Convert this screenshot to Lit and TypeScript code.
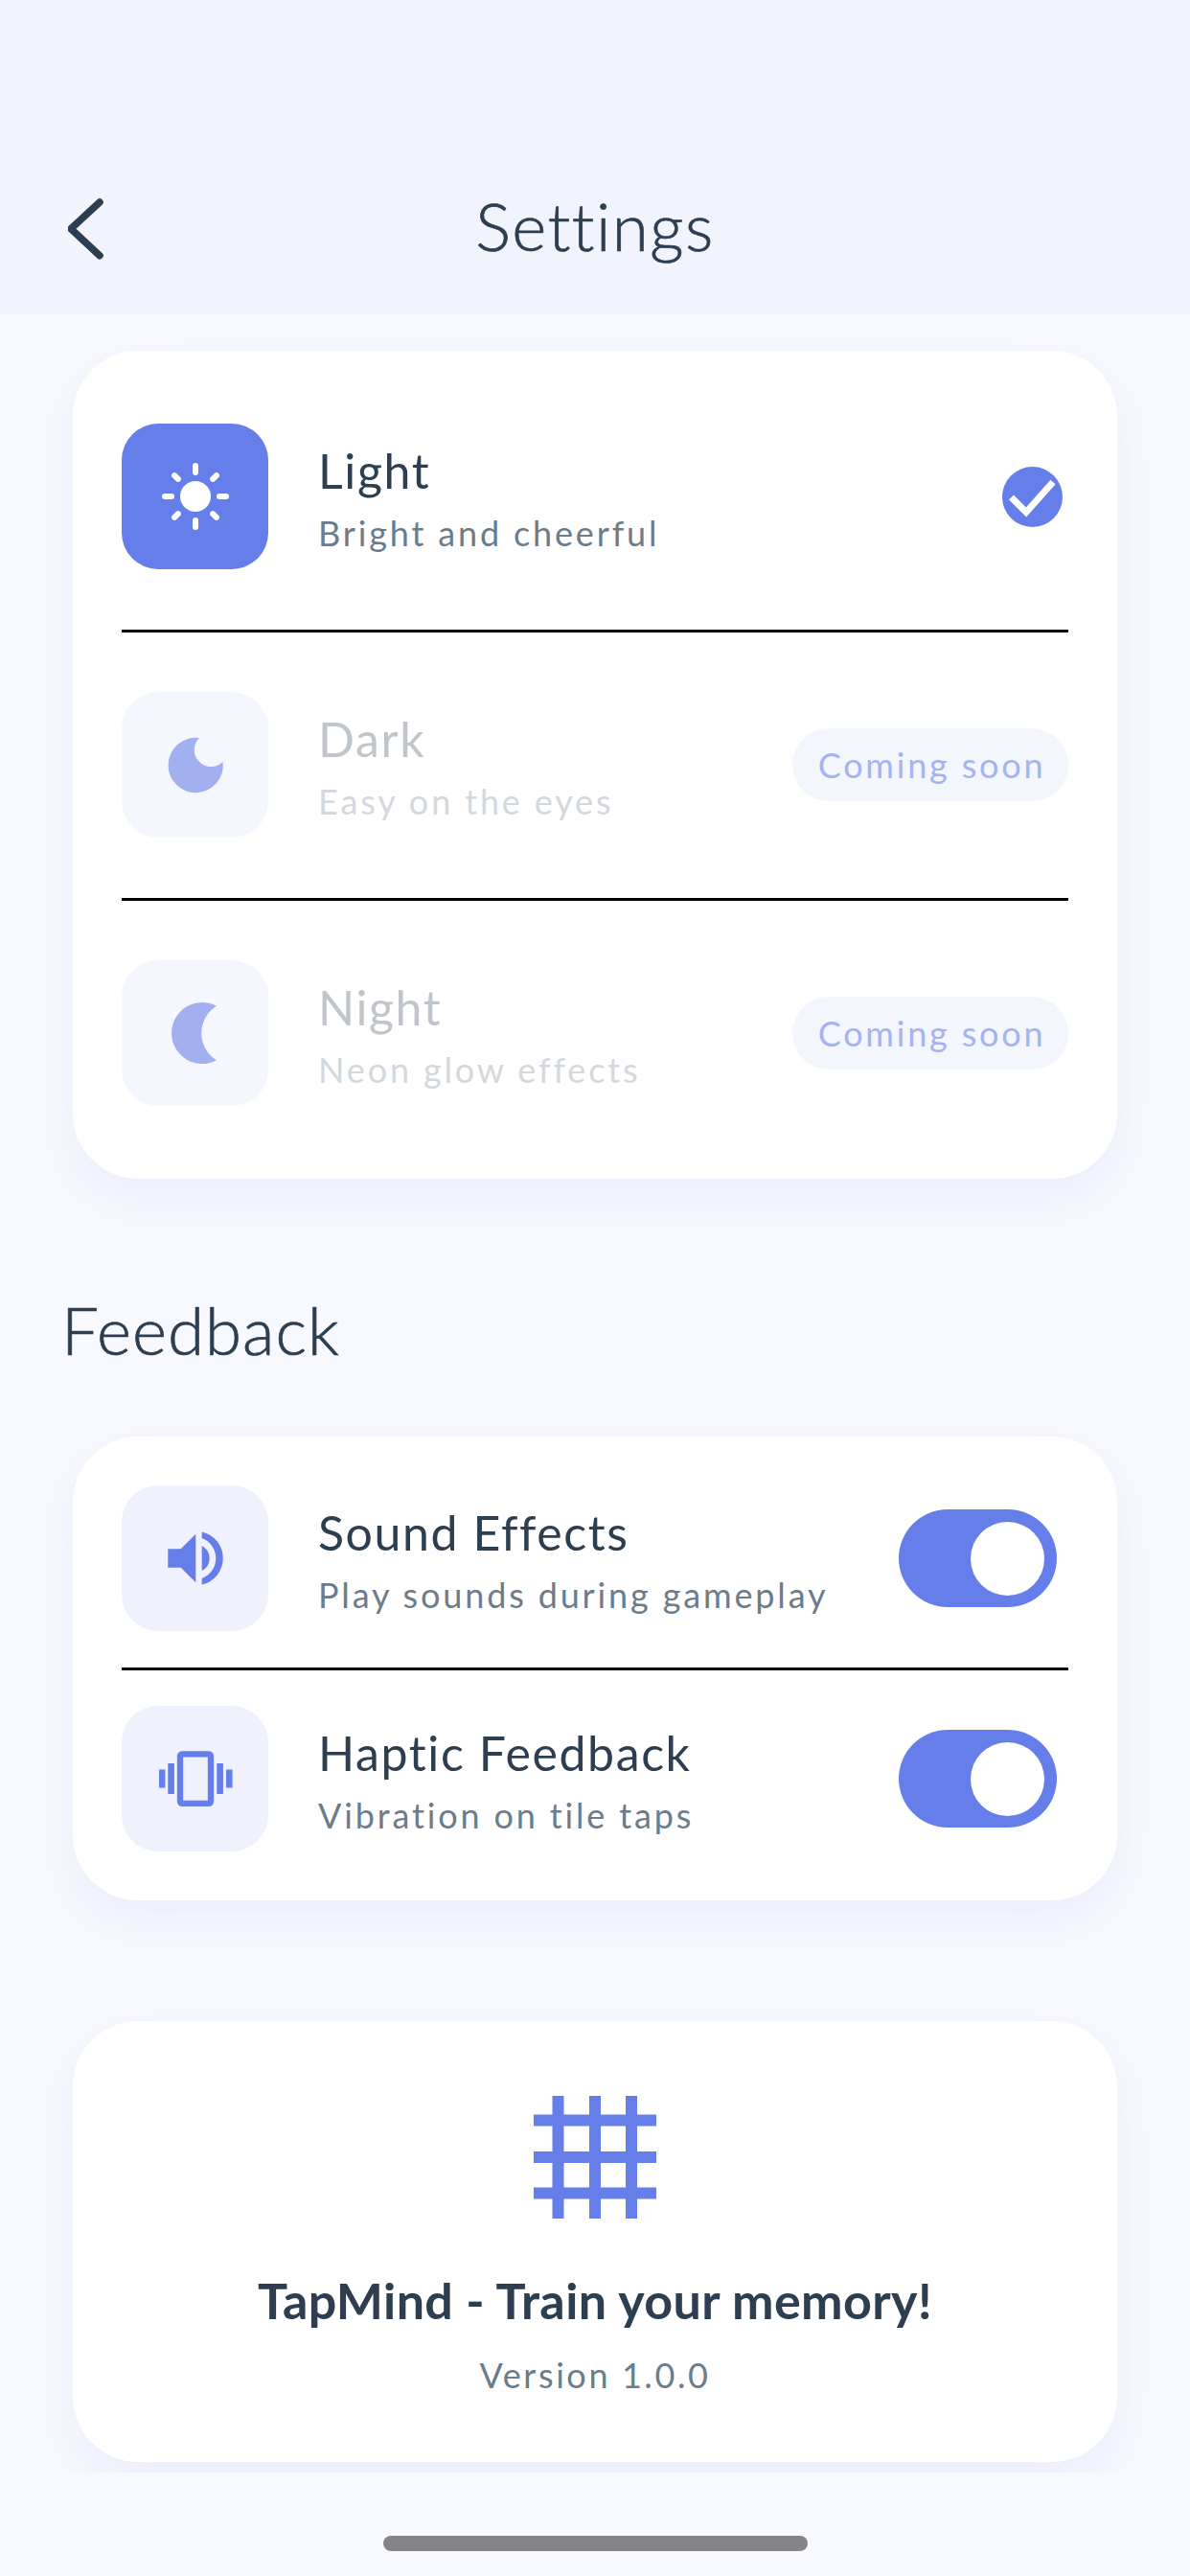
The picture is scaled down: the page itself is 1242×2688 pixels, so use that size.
import { LitElement, css, html, svg } from "lit";
import { customElement } from "lit/decorators.js";

const sunRays = [0, 45, 90, 135, 180, 225, 270, 315];

const icons = {
  sun: svg`<circle r="16" fill="currentColor" />
    ${sunRays.map((a) => {
      const diagonal = a % 90 !== 0;
      return svg`<line x1="0" y1=${diagonal ? -25.6 : -25} x2="0" y2=${diagonal ? -31 : -32}
        transform="rotate(${a})" stroke="currentColor" stroke-width="6" stroke-linecap="round" />`;
    })}`,
  dark: svg`<path fill="currentColor" d="M4 -28A28.7 28.7 0 1 0 28.7 -3A17.5 17.5 0 0 1 4 -28Z" />`,
  night: svg`<path fill="currentColor" d="M22 -28.3A32 32 0 1 0 22 28.3A33.3 33.3 0 0 1 22 -28.3Z" />`,
  sound: svg`<g fill="currentColor">
    <path d="M-28.7 -9.7H-15.3L0.3 -25.3V25.3L-15.3 9.7H-28.7Z" />
    <path d="M6.7 -13A14.6 14.6 0 0 1 6.7 13Z" />
    <path d="M6.7 -27.6A28.3 28.3 0 0 1 6.7 27.6V21A22.4 22.4 0 0 0 6.7 -21Z" />
  </g>`,
  haptic: svg`<g fill="currentColor">
    <rect x="-16" y="-25.6" width="32" height="51.4" rx="2" fill="none" stroke="currentColor" stroke-width="6.3" />
    <rect x="-28.7" y="-16" width="6.6" height="32" />
    <rect x="-38" y="-9.5" width="6.4" height="19" />
    <rect x="22.3" y="-16" width="6.6" height="32" />
    <rect x="32" y="-9.5" width="6.6" height="19" />
  </g>`,
};

type IconName = keyof typeof icons;

const glyph = (name: IconName) =>
  html`<svg class="glyph" viewBox="-50 -50 100 100">${icons[name]}</svg>`;

@customElement("app-root")
export class AppRoot extends LitElement {
  static styles = css`
    :host {
      display: block;
      width: 1242px;
      height: 2688px;
      background: #f8f9fe;
      color: #2c3e50;
      font-family: Lato, "Noto Sans", sans-serif;
      font-variant-ligatures: none;
      overflow: hidden;
    }
    .screen {
      display: flex;
      flex-direction: column;
      height: 2688px;
    }
    .header {
      height: 328px;
      flex: none;
      box-sizing: border-box;
      padding: 188px 0 0 71px;
      background: #f1f4fd;
      display: grid;
      grid-template-columns: 1fr auto 1fr;
      align-items: start;
    }
    .back {
      width: 40px;
      height: 66px;
      margin-top: 18px;
    }
    .header h1 {
      margin: 0 0 0 -71px;
      font-size: 69px;
      line-height: 96px;
      font-weight: 300;
      letter-spacing: 1.5px;
      -webkit-text-stroke: 0.7px #2c3e50;
    }
    .content {
      height: 2252px;
      flex: none;
      box-sizing: border-box;
      overflow: hidden;
      padding: 38px 76px 0;
    }
    .card {
      background: #fff;
      border-radius: 68px;
      padding: 13px 51px;
      box-shadow: 0 20px 50px rgba(101, 126, 233, 0.09);
    }
    .row {
      display: flex;
      align-items: center;
      padding: 63px 0;
    }
    .row + .row {
      border-top: 3px solid #000;
      padding-top: 62px;
    }
    .row.compact {
      padding: 38px 0;
    }
    .row.compact + .row.compact {
      padding-top: 37px;
    }
    .icon-box {
      width: 153px;
      height: 152px;
      flex: none;
      border-radius: 38px;
      background: #eff1fd;
      color: #657ee9;
      display: flex;
      align-items: center;
      justify-content: center;
    }
    .icon-box.active {
      background: #657ee9;
      color: #fff;
    }
    .icon-box.disabled {
      background: #f5f7ff;
      color: #a3b0f0;
    }
    .glyph {
      width: 100px;
      height: 100px;
    }
    .text {
      flex: 1;
      margin-left: 52px;
      padding-top: 3px;
      min-width: 0;
    }
    .name {
      font-size: 50px;
      line-height: 64px;
      letter-spacing: 1.6px;
    }
    .desc {
      margin-top: 8px;
      font-size: 36px;
      line-height: 50px;
      letter-spacing: 2.85px;
      color: #6b7c8c;
    }
    .disabled-text .name {
      color: #c0c5cb;
    }
    .disabled-text .desc {
      color: #d4d8dc;
    }
    .check {
      width: 63px;
      height: 63px;
      margin-right: 6px;
    }
    .pill {
      flex: none;
      width: 288px;
      height: 76px;
      box-sizing: border-box;
      border-radius: 38px;
      background: #f4f6fe;
      color: #a5b3f1;
      font-size: 36px;
      line-height: 76px;
      text-align: center;
      letter-spacing: 2.8px;
      padding-left: 3px;
    }
    .section {
      margin: 110px 0 0 -12px;
      font-size: 69px;
      line-height: 96px;
      font-weight: 300;
      letter-spacing: 1px;
      -webkit-text-stroke: 0.7px #2c3e50;
    }
    .section + .card {
      margin-top: 63px;
    }
    .toggle {
      flex: none;
      width: 165px;
      height: 102px;
      margin-right: 12px;
      box-sizing: border-box;
      border-radius: 51px;
      background: #657ee9;
      padding: 13px;
      display: flex;
      justify-content: flex-end;
    }
    .knob {
      width: 77px;
      height: 77px;
      border-radius: 50%;
      background: #fff;
    }
    .about {
      margin-top: 126px;
      height: 460px;
      box-sizing: border-box;
      padding: 78px 0 0;
      display: flex;
      flex-direction: column;
      align-items: center;
    }
    .logo {
      width: 128px;
      height: 128px;
      fill: #657ee9;
    }
    .app-name {
      margin-top: 50px;
      font-size: 52px;
      line-height: 70px;
      font-weight: 700;
      letter-spacing: 0.4px;
    }
    .version {
      margin-top: 18px;
      font-size: 36px;
      line-height: 50px;
      letter-spacing: 2.6px;
      color: #6b7c8c;
    }
    .home-zone {
      flex: 1;
      display: flex;
      justify-content: center;
      padding-top: 66px;
    }
    .home-bar {
      width: 443px;
      height: 16px;
      border-radius: 8px;
      background: #858589;
    }
  `;

  private renderThemeRow(
    icon: IconName,
    name: string,
    desc: string,
    active: boolean,
  ) {
    return html`
      <div class="row">
        <div class="icon-box ${active ? "active" : "disabled"}">${glyph(icon)}</div>
        <div class="text ${active ? "" : "disabled-text"}">
          <div class="name">${name}</div>
          <div class="desc">${desc}</div>
        </div>
        ${active
          ? html`<svg class="check" viewBox="0 0 63 63">
              <circle cx="31.5" cy="31.5" r="31.5" fill="#657ee9" />
              <path d="M9.5 32L25 47.5L53 16" fill="none" stroke="#fff" stroke-width="7" />
            </svg>`
          : html`<div class="pill">Coming soon</div>`}
      </div>
    `;
  }

  private renderToggleRow(icon: IconName, name: string, desc: string) {
    return html`
      <div class="row compact">
        <div class="icon-box">${glyph(icon)}</div>
        <div class="text">
          <div class="name">${name}</div>
          <div class="desc">${desc}</div>
        </div>
        <div class="toggle"><div class="knob"></div></div>
      </div>
    `;
  }

  render() {
    return html`
      <div class="screen">
        <div class="header">
          <svg class="back" viewBox="0 0 40 66">
            <path
              d="M33 5L3 32.7L33 60.7"
              fill="none"
              stroke="#2c3e50"
              stroke-width="7.5"
              stroke-linecap="round"
              stroke-linejoin="round"
            />
          </svg>
          <h1>Settings</h1>
        </div>
        <div class="content">
          <div class="card">
            ${this.renderThemeRow("sun", "Light", "Bright and cheerful", true)}
            ${this.renderThemeRow("dark", "Dark", "Easy on the eyes", false)}
            ${this.renderThemeRow("night", "Night", "Neon glow effects", false)}
          </div>
          <div class="section">Feedback</div>
          <div class="card">
            ${this.renderToggleRow("sound", "Sound Effects", "Play sounds during gameplay")}
            ${this.renderToggleRow("haptic", "Haptic Feedback", "Vibration on tile taps")}
          </div>
          <div class="card about">
            <svg class="logo" viewBox="0 0 128 128">
              <rect x="19.5" width="12" height="128" />
              <rect x="58" width="12" height="128" />
              <rect x="96" width="12" height="128" />
              <rect y="19.5" width="128" height="12" />
              <rect y="58" width="128" height="12" />
              <rect y="95.5" width="128" height="12" />
            </svg>
            <div class="app-name">TapMind - Train your memory!</div>
            <div class="version">Version 1.0.0</div>
          </div>
        </div>
        <div class="home-zone"><div class="home-bar"></div></div>
      </div>
    `;
  }
}
